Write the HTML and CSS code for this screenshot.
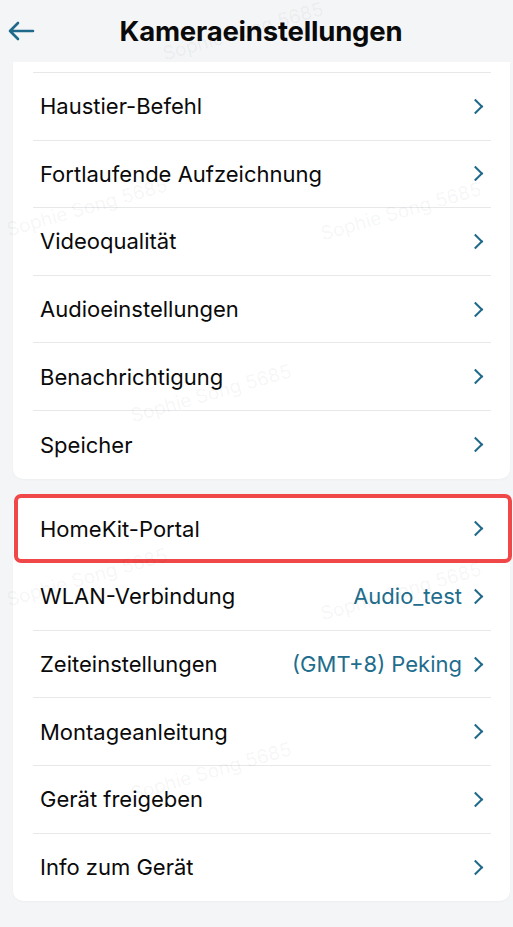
FILE: index.html
```html
<!DOCTYPE html>
<html>
    <head>
        <title>Kameraeinstellungen</title>
        <link rel="stylesheet" href="styles.css">
    </head>
    <body>
        <div class="header">
            <button class="back">
                <svg width="30" height="22" viewBox="0 0 30 22">
                    <path d="M27 11H4M12 3L4 11L12 19" fill="none" stroke="#1f6a8a" stroke-width="2.6" stroke-linecap="round" stroke-linejoin="round"/>
                </svg>
            </button>
            <h1>Kameraeinstellungen</h1>
        </div>

        <div class="card first">
            <div class="row"><span class="label">Haustier-Befehl</span><span class="chev"></span></div>
            <div class="row"><span class="label">Fortlaufende Aufzeichnung</span><span class="chev"></span></div>
            <div class="row"><span class="label">Videoqualität</span><span class="chev"></span></div>
            <div class="row"><span class="label">Audioeinstellungen</span><span class="chev"></span></div>
            <div class="row"><span class="label">Benachrichtigung</span><span class="chev"></span></div>
            <div class="row"><span class="label">Speicher</span><span class="chev"></span></div>
        </div>

        <div class="card">
            <div class="row highlight"><span class="label">HomeKit-Portal</span><span class="chev"></span></div>
            <div class="row"><span class="label">WLAN-Verbindung</span><span class="value">Audio_test</span><span class="chev"></span></div>
            <div class="row"><span class="label">Zeiteinstellungen</span><span class="value">(GMT+8) Peking</span><span class="chev"></span></div>
            <div class="row"><span class="label">Montageanleitung</span><span class="chev"></span></div>
            <div class="row"><span class="label">Gerät freigeben</span><span class="chev"></span></div>
            <div class="row"><span class="label">Info zum Gerät</span><span class="chev"></span></div>
        </div>

        <!-- watermark -->
        <div class="mark" style="left: 160px; top: 20px;">Sophie Song 5685</div>
        <div class="mark" style="left: 4px; top: 196px;">Sophie Song 5685</div>
        <div class="mark" style="left: 318px; top: 200px;">Sophie Song 5685</div>
        <div class="mark" style="left: 128px; top: 382px;">Sophie Song 5685</div>
        <div class="mark" style="left: 4px; top: 566px;">Sophie Song 5685</div>
        <div class="mark" style="left: 318px; top: 580px;">Sophie Song 5685</div>
        <div class="mark" style="left: 128px; top: 760px;">Sophie Song 5685</div>
    </body>
</html>
```

FILE: styles.css
```css
body {
    font-family: Inter, "Noto Sans", sans-serif;
    margin: 0;
    padding: 0 3px 0 13px;
    background: #f4f5f7;
    color: #0a0a0a;
    width: 513px;
    height: 927px;
    box-sizing: border-box;
    overflow: hidden;
    position: relative;
}

.header {
    height: 62px;
    display: flex;
    align-items: center;
    justify-content: center;
    position: relative;
    margin-left: -13px;
}

.back {
    position: absolute;
    left: 6px;
    top: 20px;
    padding: 0;
    border: none;
    background: none;
}

h1 {
    margin: 0 0 0 12px;
    font-size: 27.5px;
    font-weight: 700;
    letter-spacing: -0.2px;
    color: #0a0a0a;
}

.card {
    background: #fff;
    border-radius: 10px;
    margin-bottom: 17px;
    box-shadow: 0 1px 2px rgba(0, 0, 0, 0.03);
}

.card.first {
    border-radius: 0 0 10px 10px;
    padding-top: 10px;
    position: relative;
}

.card.first::before {
    content: "";
    display: block;
    height: 1px;
    margin: 0 19px 0 20px;
    background: #e6e8ea;
}

.row {
    height: 67.6px;
    display: flex;
    align-items: center;
    margin: 0 19px 0 20px;
    padding-left: 7px;
    border-bottom: 1px solid #e6e8ea;
    box-sizing: border-box;
    font-size: 22px;
    position: relative;
}

.row:last-child {
    border-bottom: none;
}

.label {
    flex: 1;
}

.value {
    color: #226d8d;
    margin-right: 8px;
}

.chev {
    width: 9px;
    height: 9px;
    border-top: 2.2px solid #1f6a8a;
    border-right: 2.2px solid #1f6a8a;
    transform: rotate(45deg);
    margin-right: 10px;
}

.highlight::after {
    content: "";
    position: absolute;
    left: -19px;
    right: -21px;
    top: -2px;
    bottom: -1px;
    border: 4px solid #f04848;
    border-radius: 7px;
}

.mark {
    position: absolute;
    z-index: 2;
    font-size: 19px;
    color: rgba(0, 0, 0, 0.055);
    transform: rotate(-16deg);
    white-space: nowrap;
    pointer-events: none;
}
```
